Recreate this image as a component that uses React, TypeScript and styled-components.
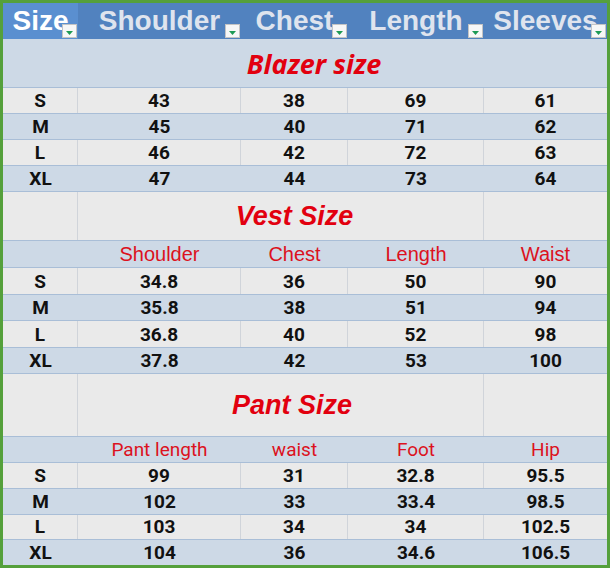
import React from "react";
import styled, { createGlobalStyle, css } from "styled-components";

const GlobalStyle = createGlobalStyle`
  html, body { margin: 0; padding: 0; background: #ffffff; }
  * { box-sizing: border-box; }
`;

const COLS = "75px 163px 107px 136px 1fr";

const Frame = styled.div`
  width: 610px;
  height: 568px;
  border: 3px solid #55a03b;
  display: flex;
  flex-direction: column;
  overflow: hidden;
  background: #e9e9e9;
`;

type Tone = "grey" | "blue";

const Row = styled.div<{ $tone: Tone; $h?: number; $fill?: boolean; $noTop?: boolean }>`
  display: grid;
  grid-template-columns: ${COLS};
  border-top: ${(p) => (p.$noTop ? "none" : "1px solid #a9bed7")};
  background: ${(p) => (p.$tone === "grey" ? "#eaeaea" : "#cdd9e6")};
  ${(p) => (p.$fill ? css`flex: 1 1 0;` : css`height: ${p.$h}px; flex: none;`)}
`;

const HeaderRow = styled.div`
  display: grid;
  grid-template-columns: ${COLS};
  height: 36px;
  flex: none;
  background: #5182bf;
`;

const HeaderCell = styled.div<{ $first?: boolean }>`
  position: relative;
  display: flex;
  align-items: center;
  justify-content: center;
  background: ${(p) => (p.$first ? "#5a8fd0" : "#5182bf")};
  font-family: "Liberation Sans", Arial, sans-serif;
  font-weight: 700;
  font-size: 28px;
  color: ${(p) => (p.$first ? "#ffffff" : "#dfe4ee")};
  white-space: nowrap;
`;

const FilterButton = styled.span`
  position: absolute;
  right: 1px;
  bottom: 1px;
  width: 15px;
  height: 14px;
  background: #f7f7f7;
  border: 1px solid #c4c4c4;
  display: flex;
  align-items: center;
  justify-content: center;
  padding-top: 3px;
`;

const Cell = styled.div<{ $tone: Tone; $divider?: boolean }>`
  display: flex;
  align-items: center;
  justify-content: center;
  border-right: ${(p) =>
    p.$divider ? `1px solid ${p.$tone === "grey" ? "#d0d4da" : "#bfcddd"}` : "none"};
  font-family: Roboto, "DejaVu Sans", sans-serif;
  font-weight: 700;
  font-size: 19px;
  color: #111111;
`;

const TitleCell = styled.div<{ $tone: Tone; $span: number; $shift: number; $calibri?: boolean; $divider?: boolean }>`
  display: flex;
  align-items: center;
  justify-content: center;
  grid-column: span ${(p) => p.$span};
  padding-left: ${(p) => p.$shift}px;
  border-right: ${(p) =>
    p.$divider ? `1px solid ${p.$tone === "grey" ? "#d0d4da" : "#bfcddd"}` : "none"};
  font-family: ${(p) =>
    p.$calibri ? `"Open Sans", "Liberation Sans", sans-serif` : `"Liberation Sans", Arial, sans-serif`};
  font-size: 27px;
  font-weight: 700;
  font-style: italic;
  color: #e2000f;
  white-space: nowrap;
`;

const SubHeadCell = styled.div<{ $din?: boolean }>`
  display: flex;
  align-items: center;
  justify-content: center;
  font-family: ${(p) => (p.$din ? `Roboto, "DejaVu Sans", sans-serif` : `"Liberation Sans", Arial, sans-serif`)};
  font-size: ${(p) => (p.$din ? 19 : 20)}px;
  font-weight: 400;
  color: #dc1120;
  white-space: nowrap;
`;

const Filter = () => (
  <FilterButton>
    <svg width="7" height="4" viewBox="0 0 7 4">
      <polygon points="0,0 7,0 3.5,4" fill="#1e9a55" />
    </svg>
  </FilterButton>
);

const tones: Tone[] = ["grey", "blue", "grey", "blue"];

type DataRow = [string, string, string, string, string];

const blazer: DataRow[] = [
  ["S", "43", "38", "69", "61"],
  ["M", "45", "40", "71", "62"],
  ["L", "46", "42", "72", "63"],
  ["XL", "47", "44", "73", "64"],
];

const vest: DataRow[] = [
  ["S", "34.8", "36", "50", "90"],
  ["M", "35.8", "38", "51", "94"],
  ["L", "36.8", "40", "52", "98"],
  ["XL", "37.8", "42", "53", "100"],
];

const pant: DataRow[] = [
  ["S", "99", "31", "32.8", "95.5"],
  ["M", "102", "33", "33.4", "98.5"],
  ["L", "103", "34", "34", "102.5"],
  ["XL", "104", "36", "34.6", "106.5"],
];

const DataRows = ({ rows, heights, fill }: { rows: DataRow[]; heights?: number[]; fill?: boolean }) => (
  <>
    {rows.map((r, i) => (
      <Row key={r[0]} $tone={tones[i]} $h={heights ? heights[i] : 26} $fill={fill}>
        {r.map((v, j) => (
          <Cell key={j} $tone={tones[i]} $divider={j < 4 && tones[i] === "grey"}>
            {v}
          </Cell>
        ))}
      </Row>
    ))}
  </>
);

export default function App() {
  const headers = ["Size", "Shoulder", "Chest", "Length", "Sleeves"];
  return (
    <>
      <GlobalStyle />
      <Frame>
        <HeaderRow>
          {headers.map((h, i) => (
            <HeaderCell key={h} $first={i === 0}>
              {h}
              <Filter />
            </HeaderCell>
          ))}
        </HeaderRow>

        <Row $tone="blue" $h={48} $noTop>
          <TitleCell $tone="blue" $span={5} $shift={18} $calibri>
            Blazer size
          </TitleCell>
        </Row>
        <DataRows rows={blazer} />

        <Row $tone="grey" $h={49}>
          <Cell $tone="grey" $divider />
          <TitleCell $tone="grey" $span={3} $shift={28} $divider>
            Vest Size
          </TitleCell>
          <Cell $tone="grey" />
        </Row>
        <Row $tone="blue" $h={27}>
          <SubHeadCell />
          <SubHeadCell>Shoulder</SubHeadCell>
          <SubHeadCell>Chest</SubHeadCell>
          <SubHeadCell>Length</SubHeadCell>
          <SubHeadCell>Waist</SubHeadCell>
        </Row>
        <DataRows rows={vest} heights={[27, 26, 27, 26]} />

        <Row $tone="grey" $h={63}>
          <Cell $tone="grey" $divider />
          <TitleCell $tone="grey" $span={3} $shift={23} $divider>
            Pant Size
          </TitleCell>
          <Cell $tone="grey" />
        </Row>
        <Row $tone="blue" $h={26}>
          <SubHeadCell $din />
          <SubHeadCell $din>Pant length</SubHeadCell>
          <SubHeadCell $din>waist</SubHeadCell>
          <SubHeadCell $din>Foot</SubHeadCell>
          <SubHeadCell $din>Hip</SubHeadCell>
        </Row>
        <DataRows rows={pant} fill />
      </Frame>
    </>
  );
}
